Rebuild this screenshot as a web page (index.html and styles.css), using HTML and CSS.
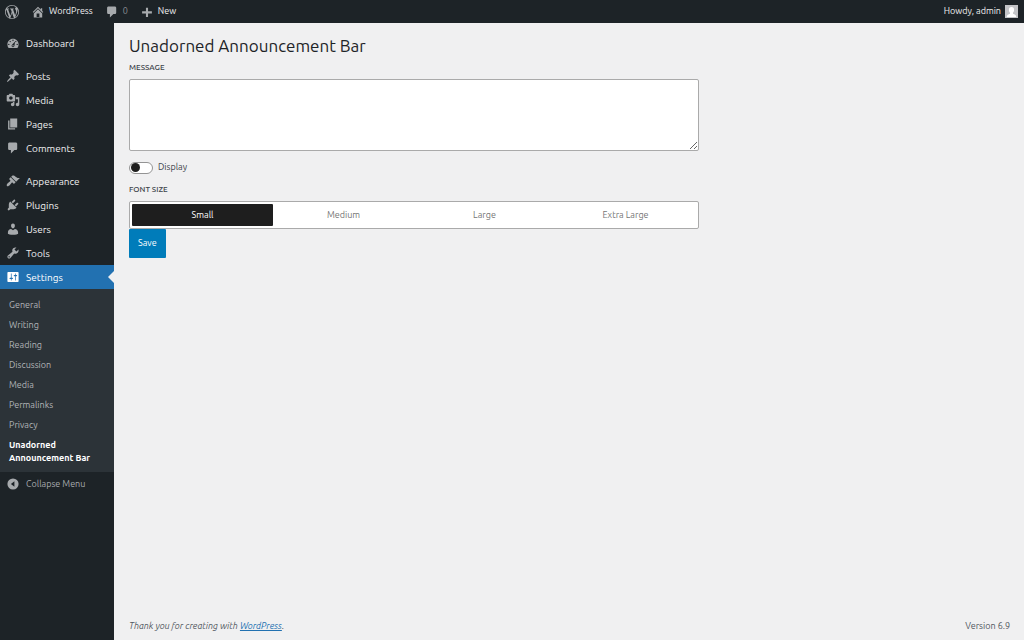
FILE: index.html
```html
<!DOCTYPE html>
<html lang="en">
  <head>
    <meta charset="UTF-8" />
    <meta name="viewport" content="width=device-width, initial-scale=1.0" />
    <title>Unadorned Announcement Bar - WordPress</title>
    <link rel="stylesheet" href="styles.css">
  </head>
  <body>
    <header class="adminbar">
      <a href="#" class="logo" aria-label="About WordPress">
        <svg class="icon" viewBox="0 0 20 20"><path d="M20 10c0-5.51-4.49-10-10-10C4.48 0 0 4.49 0 10c0 5.52 4.48 10 10 10 5.51 0 10-4.48 10-10zM7.78 15.37L4.37 6.22c.55-.02 1.17-.08 1.17-.08.5-.06.44-1.13-.06-1.11 0 0-1.45.11-2.37.11-.18 0-.37 0-.58-.01C4.12 2.69 6.87 1.11 10 1.11c2.33 0 4.45.87 6.05 2.34-.68-.11-1.65.39-1.65 1.58 0 .74.45 1.36.9 2.1.35.61.55 1.36.55 2.46 0 1.49-1.4 5-1.4 5l-3.03-8.37c.54-.02.82-.17.82-.17.5-.05.44-1.25-.06-1.22 0 0-1.44.12-2.38.12-.87 0-2.33-.12-2.33-.12-.5-.03-.56 1.2-.06 1.22l.92.08 1.26 3.41zM17.41 10c.24-.64.74-1.87.43-4.25.7 1.29 1.05 2.71 1.05 4.25 0 3.29-1.73 6.24-4.4 7.78.97-2.59 1.94-5.2 2.92-7.78zM6.1 18.09C3.12 16.65 1.11 13.53 1.11 10c0-1.3.23-2.48.72-3.59C3.25 10.3 4.67 14.2 6.1 18.09zm4.03-6.63l2.58 6.98c-.86.29-1.76.45-2.71.45-.79 0-1.57-.11-2.29-.33.81-2.38 1.62-4.74 2.42-7.1z"/></svg>
      </a>
      <a href="#">
        <svg class="icon" viewBox="0 0 20 20"><path d="M16 8.5l1.53 1.53-1.06 1.06L10 4.6l-6.47 6.49-1.06-1.06L10 2.5l4 4v-2h2v4zm-6-2.46l6 5.99V18H4v-5.97zM12 17v-5H8v5h4z"/></svg>
        <span>WordPress</span>
      </a>
      <a href="#" class="count">
        <svg class="icon" viewBox="0 0 20 20"><path d="M5 2h9c1.1 0 2 .9 2 2v7c0 1.1-.9 2-2 2h-2l-5 5v-5H5c-1.1 0-2-.9-2-2V4c0-1.1.9-2 2-2z"/></svg>
        <span>0</span>
      </a>
      <a href="#">
        <svg class="icon" viewBox="0 0 20 20"><path d="M17 9v3h-5.500v5h-3v-5H3V9h5.500V4h3v5z"/></svg>
        <span>New</span>
      </a>
      <a href="#" class="account">
        <span>Howdy, admin</span>
        <svg class="avatar" viewBox="0 0 13 13"><path fill="#c3c4c7" d="M0 0h13v13H0z"/><path fill="#fff" d="M6.500 2C8.300 2 9.200 3.300 9.100 5 9 6.300 8.500 7.200 8 7.700v1c1.600.5 3 .9 3.300 3.300H1.700C2 9.600 3.400 9.200 5 8.700v-1C4.500 7.200 4 6.300 3.900 5 3.800 3.300 4.700 2 6.500 2z"/></svg>
      </a>
    </header>

    <div class="wrap">
      <nav class="sidebar">
        <ul class="menu">
          <li>
            <a href="#">
              <svg class="icon" viewBox="0 0 20 20"><path fill-rule="evenodd" d="M3.76 17h12.48c1.1-1.370 1.760-3.110 1.760-5 0-4.420-3.580-8-8-8s-8 3.580-8 8c0 1.890.66 3.630 1.760 5zM10 5c.55 0 1 .45 1 1s-.45 1-1 1-1-.45-1-1 .45-1 1-1zM6 7c.55 0 1 .45 1 1s-.45 1-1 1-1-.45-1-1 .45-1 1-1zm8 0c.55 0 1 .45 1 1s-.45 1-1 1-1-.45-1-1 .45-1 1-1zm-5.370 5.550L13 8l-1 6c0 1.100-.9 2-2 2s-2-.9-2-2c0-.57.24-1.080.63-1.450zM4 11c.55 0 1 .45 1 1s-.45 1-1 1-1-.45-1-1 .45-1 1-1zm12 0c.55 0 1 .45 1 1s-.45 1-1 1-1-.45-1-1 .45-1 1-1zm-5 3c0-.55-.45-1-1-1s-1 .45-1 1 .45 1 1 1 1-.45 1-1z"/></svg>
              Dashboard
            </a>
          </li>
          <li class="group">
            <a href="#">
              <svg class="icon" viewBox="0 0 20 20"><path d="M10.44 3.02l1.82-1.82 6.36 6.35-1.83 1.82c-1.05-.68-2.48-.57-3.41.36l-.75.75c-.92.93-1.04 2.35-.35 3.41l-1.83 1.82-2.41-2.41-2.8 2.79c-.42.42-3.38 2.71-3.8 2.29s1.86-3.39 2.28-3.81l2.79-2.79L4.1 9.36l1.83-1.82c1.05.69 2.48.57 3.4-.36l.75-.75c.93-.92 1.05-2.35.36-3.41z"/></svg>
              Posts
            </a>
          </li>
          <li>
            <a href="#">
              <svg class="icon" viewBox="0 0 20 20"><path fill-rule="evenodd" d="M13 11V4c0-.55-.45-1-1-1h-1.67L9 1H5L3.67 3H2c-.55 0-1 .45-1 1v7c0 .55.45 1 1 1h10c.55 0 1-.45 1-1zM7 4.5c1.38 0 2.5 1.12 2.5 2.5S8.38 9.5 7 9.5 4.5 8.38 4.5 7 5.62 4.5 7 4.5zM14 6h5v10.500c0 1.380-1.120 2.500-2.500 2.500S14 17.880 14 16.500s1.120-2.500 2.500-2.500c.17 0 .34.02.5.05V9h-3V6zm-4 8.050V13h2v3.500c0 1.380-1.120 2.500-2.500 2.500S7 17.880 7 16.500 8.120 14 9.500 14c.17 0 .34.02.5.05z"/></svg>
              Media
            </a>
          </li>
          <li>
            <a href="#">
              <svg class="icon" viewBox="0 0 20 20"><path d="M6 15V2h10v13H6zm-1 1h8v2H3V5h2v11z"/></svg>
              Pages
            </a>
          </li>
          <li>
            <a href="#">
              <svg class="icon" viewBox="0 0 20 20"><path d="M5 2h9c1.1 0 2 .9 2 2v7c0 1.1-.9 2-2 2h-2l-5 5v-5H5c-1.1 0-2-.9-2-2V4c0-1.1.9-2 2-2z"/></svg>
              Comments
            </a>
          </li>
          <li class="group">
            <a href="#">
              <svg class="icon" viewBox="0 0 20 20"><path d="M14.48 11.06L7.41 3.99l1.5-1.5c.5-.56 2.3-.47 3.51.32 1.21.8 1.43 1.28 2.91 2.1 1.18.64 2.45 1.26 4.45.85zm-.71.71L6.7 4.7 4.93 6.47c-.39.39-.39 1.02 0 1.41l1.06 1.06c.39.39.39 1.03 0 1.42-.6.6-1.43 1.11-2.21 1.69-.35.26-.7.53-1.01.84C1.43 14.23.4 16.08 1.4 17.07c.99 1 2.84-.03 4.18-1.36.31-.31.58-.66.85-1.02.57-.78 1.08-1.61 1.69-2.21.39-.39 1.02-.39 1.41 0l1.06 1.06c.39.39 1.02.39 1.41 0z"/></svg>
              Appearance
            </a>
          </li>
          <li>
            <a href="#">
              <svg class="icon" viewBox="0 0 20 20"><path d="M13.11 4.36L9.87 7.6 8 5.73l3.24-3.24c.35-.34 1.05-.2 1.56.32.52.51.66 1.21.31 1.55zm-8 1.77l.91-1.12 9.01 9.01-1.19.84c-.71.71-2.63 1.16-3.82 1.16H6.14L4.9 17.26c-.59.59-1.54.59-2.12 0-.59-.58-.59-1.53 0-2.12l1.24-1.24v-3.88c0-1.13.4-3.19 1.09-3.89zm7.26 3.97l3.24-3.24c.34-.35 1.04-.21 1.55.31.52.51.66 1.21.31 1.55l-3.24 3.25z"/></svg>
              Plugins
            </a>
          </li>
          <li>
            <a href="#">
              <svg class="icon" viewBox="0 0 20 20"><path d="M10 9.25c-2.27 0-2.73-3.44-2.73-3.44C7 4.02 7.82 2 9.97 2c2.16 0 2.98 2.02 2.71 3.81 0 0-.41 3.44-2.68 3.44zm0 2.57L12.72 10c2.39 0 4.52 2.33 4.52 4.53v2.49s-3.65 1.13-7.24 1.13c-3.65 0-7.24-1.13-7.24-1.13v-2.49c0-2.25 1.94-4.48 4.47-4.48z"/></svg>
              Users
            </a>
          </li>
          <li>
            <a href="#">
              <svg class="icon" viewBox="0 0 20 20"><path d="M16.68 9.77c-1.34 1.34-3.3 1.67-4.95.99l-5.41 6.52c-.99.99-2.59.99-3.58 0s-.99-2.59 0-3.57l6.52-5.42c-.68-1.65-.35-3.61.99-4.95 1.28-1.28 3.12-1.62 4.72-1.06l-2.89 2.89 2.82 2.82 2.86-2.87c.53 1.58.18 3.39-1.08 4.65zM3.81 16.21c.4.39 1.04.39 1.43 0 .4-.4.4-1.04 0-1.43-.39-.4-1.03-.4-1.43 0-.39.39-.39 1.03 0 1.43z"/></svg>
              Tools
            </a>
          </li>
          <li>
            <a href="#" class="current">
              <svg class="icon" viewBox="0 0 20 20"><path fill-rule="evenodd" d="M18 16V4c0-.55-.45-1-1-1H3c-.55 0-1 .45-1 1v12c0 .55.45 1 1 1h14c.55 0 1-.45 1-1zM8 11h1c.55 0 1 .45 1 1s-.45 1-1 1H8v1.500c0 .28-.22.5-.5.5s-.5-.22-.5-.5V13H6c-.55 0-1-.45-1-1s.45-1 1-1h1V5.500c0-.28.22-.5.5-.5s.5.22.5.5V11zm5-2h-1c-.55 0-1-.45-1-1s.45-1 1-1h1V5.500c0-.28.22-.5.5-.5s.5.22.5.5V7h1c.55 0 1 .45 1 1s-.45 1-1 1h-1v5.500c0 .28-.22.5-.5.5s-.5-.22-.5-.5V9z"/></svg>
              Settings
            </a>
            <ul class="submenu">
              <li><a href="#">General</a></li>
              <li><a href="#">Writing</a></li>
              <li><a href="#">Reading</a></li>
              <li><a href="#">Discussion</a></li>
              <li><a href="#">Media</a></li>
              <li><a href="#">Permalinks</a></li>
              <li><a href="#">Privacy</a></li>
              <li><a href="#" class="active">Unadorned Announcement Bar</a></li>
            </ul>
          </li>
        </ul>
        <button type="button" class="collapse">
          <svg class="icon" viewBox="0 0 20 20"><path fill-rule="evenodd" d="M10 2a8 8 0 1 1 0 16 8 8 0 0 1 0-16zm2 4l-5 4 5 4z"/></svg>
          Collapse Menu
        </button>
      </nav>

      <div class="content">
        <main>
          <h1>Unadorned Announcement Bar</h1>
          <form class="settings">
            <label for="message" class="label">Message</label>
            <textarea id="message" rows="4"></textarea>

            <div class="toggle">
              <input type="checkbox" id="display" />
              <label for="display">Display</label>
            </div>

            <fieldset>
              <legend class="label">Font Size</legend>
              <div class="sizes">
                <label><input type="radio" name="size" checked /><span>Small</span></label>
                <label><input type="radio" name="size" /><span>Medium</span></label>
                <label><input type="radio" name="size" /><span>Large</span></label>
                <label><input type="radio" name="size" /><span>Extra Large</span></label>
              </div>
            </fieldset>

            <button type="button" class="save">Save</button>
          </form>
        </main>
        <footer>
          <em>Thank you for creating with <a href="#">WordPress</a>.</em>
          <span>Version 6.9</span>
        </footer>
      </div>
    </div>
  </body>
</html>
```
FILE: styles.css
```css
* {
  box-sizing: border-box;
}

body {
  display: flex;
  flex-direction: column;
  min-height: 100vh;
  margin: 0;
  background: #f0f0f1;
  color: #3c434a;
  font-family: Ubuntu, "Noto Sans", sans-serif;
  font-size: 9px;
  line-height: 13px;
}

ul {
  margin: 0;
  padding: 0;
  list-style: none;
}

.icon {
  flex: none;
  width: 14px;
  height: 14px;
  fill: #a7aaad;
}

/* admin bar */
.adminbar {
  display: flex;
  align-items: center;
  gap: 12px;
  height: 23px;
  padding: 0 6px 0 5px;
  background: #1d2327;
}

.adminbar a {
  display: flex;
  align-items: center;
  gap: 4px;
  color: #f0f0f1;
  text-decoration: none;
}

.adminbar .count {
  color: #8c8f94;
}

.adminbar .account {
  margin-left: auto;
}

.avatar {
  width: 13px;
  height: 13px;
}

.wrap {
  display: flex;
  flex: 1;
}

/* sidebar */
.sidebar {
  flex: none;
  width: 114px;
  padding-top: 8px;
  background: #1d2327;
}

.menu .group {
  margin-top: 9px;
}

.menu a,
.collapse {
  display: flex;
  align-items: center;
  gap: 6px;
  height: 24px;
  padding: 0 6px;
  color: #f0f0f1;
  font-size: 10px;
  text-decoration: none;
}

.menu .current {
  position: relative;
  background: #2271b1;
  color: #fff;
}

.menu .current .icon {
  fill: #fff;
}

.menu .current::after {
  content: "";
  position: absolute;
  top: 6px;
  right: 0;
  border: 6px solid transparent;
  border-left: 0;
  border-right-color: #f0f0f1;
}

.submenu {
  padding: 6px 0 4px;
  background: #2c3338;
}

.menu .submenu a {
  display: block;
  height: auto;
  padding: 4px 9px 3px;
  color: #b1b4b7;
  font-size: 9px;
}

.menu .submenu .active {
  color: #fff;
  font-weight: 600;
}

.collapse {
  width: 100%;
  height: 23px;
  border: 0;
  background: none;
  color: #a7aaad;
  font-family: inherit;
  font-size: 9px;
  cursor: pointer;
}

/* page */
.content {
  display: flex;
  flex: 1;
  flex-direction: column;
  padding: 13px 14px 7px 15px;
}

main {
  flex: 1;
}

h1 {
  margin: 0;
  color: #1d2327;
  font-size: 17px;
  font-weight: 400;
  line-height: 20px;
}

.settings {
  max-width: 570px;
  margin-top: 5px;
}

.label {
  display: block;
  padding: 0;
  font-size: 8px;
  font-weight: 500;
  text-transform: uppercase;
}

textarea {
  display: block;
  width: 100%;
  height: 72px;
  margin-top: 5px;
  padding: 4px 6px;
  border: 1px solid #aaa;
  border-radius: 2px;
  background: #fff;
  font: inherit;
}

.toggle {
  display: flex;
  align-items: center;
  gap: 5px;
  margin: 10px 0 9px;
}

.toggle input {
  display: flex;
  align-items: center;
  appearance: none;
  width: 24px;
  height: 12px;
  margin: 0;
  padding: 0 1px;
  border: 1px solid #949494;
  border-radius: 6px;
  background: #fff;
}

.toggle input::before {
  content: "";
  width: 9px;
  height: 9px;
  border-radius: 50%;
  background: #1e1e1e;
}

.toggle input:checked::before {
  margin-left: auto;
}

fieldset {
  min-width: 0;
  margin: 0;
  padding: 0;
  border: 0;
}

.sizes {
  display: flex;
  height: 28px;
  margin-top: 5px;
  padding: 2px;
  border: 1px solid #aaa;
  border-radius: 2px;
  background: #fff;
}

.sizes label {
  display: flex;
  flex: 1;
}

.sizes input {
  appearance: none;
  width: 0;
  margin: 0;
}

.sizes span {
  display: flex;
  flex: 1;
  align-items: center;
  justify-content: center;
  border-radius: 1px;
  color: #757575;
}

.sizes input:checked + span {
  background: #1e1e1e;
  color: #fff;
}

.save {
  display: block;
  height: 29px;
  padding: 0 9px;
  border: 0;
  border-radius: 1px;
  background: #007cba;
  color: #fff;
  font: inherit;
}

footer {
  display: flex;
  justify-content: space-between;
  color: #50575e;
}

footer a {
  color: #2271b1;
}
```
